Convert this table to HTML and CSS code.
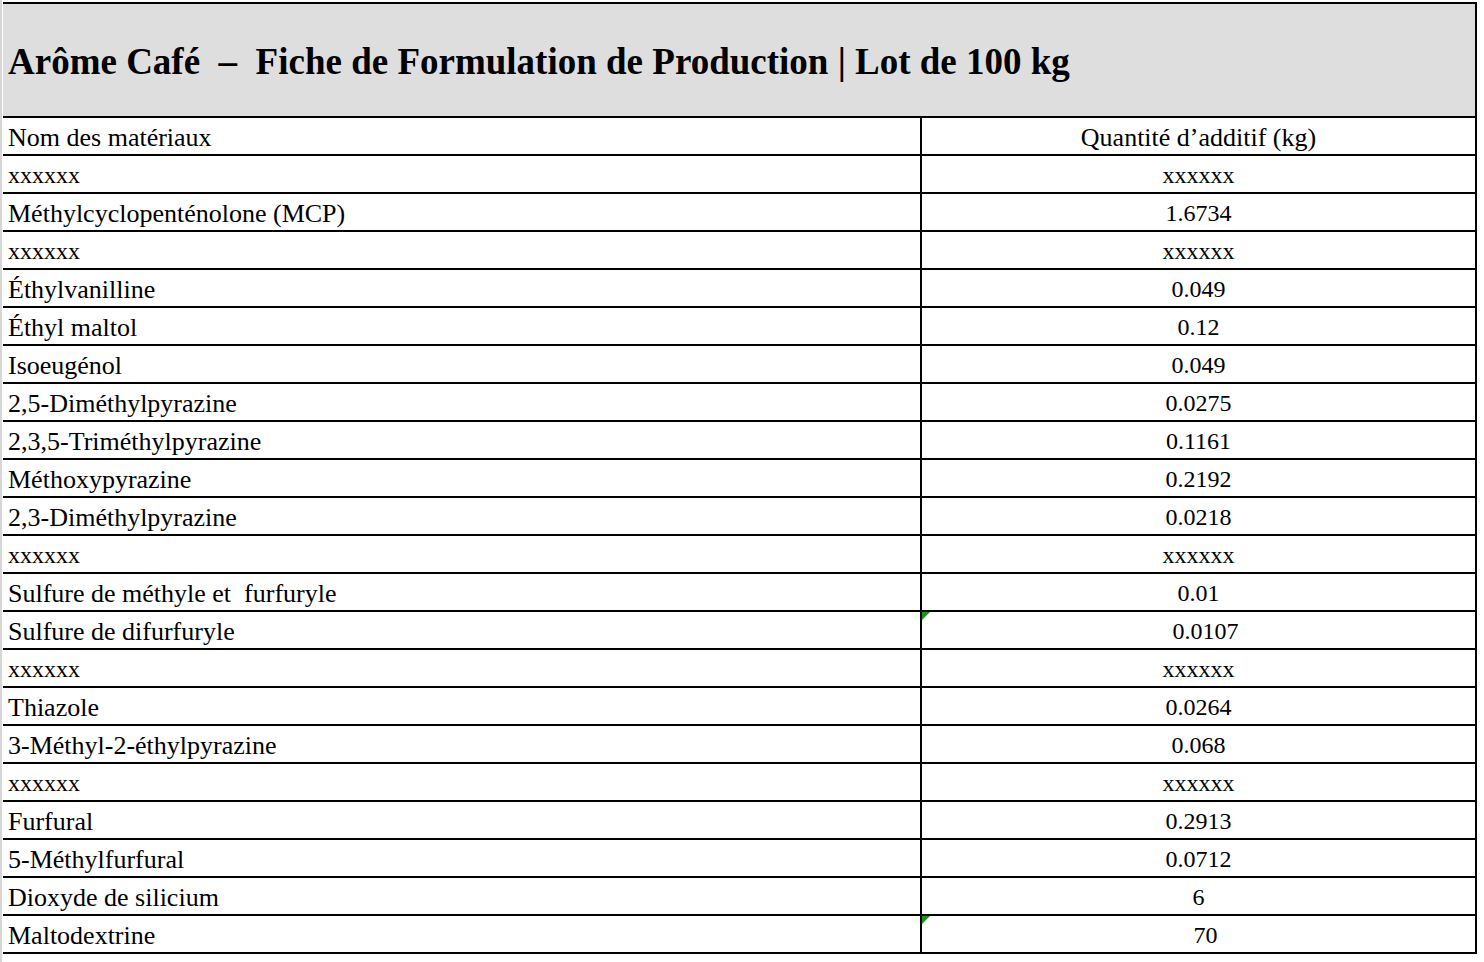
FILE: index.html
```html
<!DOCTYPE html>
<html lang="fr">
<head>
<meta charset="utf-8">
<title>Arôme Café – Fiche de Formulation</title>
<link rel="stylesheet" href="styles.css">
</head>
<body>
<div class="sheet">
  <div class="gutter"></div>
  <div class="table">
    <div class="title">Arôme Café&nbsp; –&nbsp; Fiche de Formulation de Production | Lot de 100 kg</div>
    <div class="row"><div class="c1">Nom des matériaux</div><div class="c2">Quantité d’additif (kg)</div></div>
    <div class="row"><div class="c1 n">xxxxxx</div><div class="c2 n">xxxxxx</div></div>
    <div class="row"><div class="c1">Méthylcyclopenténolone (MCP)</div><div class="c2 n">1.6734</div></div>
    <div class="row"><div class="c1 n">xxxxxx</div><div class="c2 n">xxxxxx</div></div>
    <div class="row"><div class="c1">Éthylvanilline</div><div class="c2 n">0.049</div></div>
    <div class="row"><div class="c1">Éthyl maltol</div><div class="c2 n">0.12</div></div>
    <div class="row"><div class="c1">Isoeugénol</div><div class="c2 n">0.049</div></div>
    <div class="row"><div class="c1">2,5-Diméthylpyrazine</div><div class="c2 n">0.0275</div></div>
    <div class="row"><div class="c1">2,3,5-Triméthylpyrazine</div><div class="c2 n">0.1161</div></div>
    <div class="row"><div class="c1">Méthoxypyrazine</div><div class="c2 n">0.2192</div></div>
    <div class="row"><div class="c1">2,3-Diméthylpyrazine</div><div class="c2 n">0.0218</div></div>
    <div class="row"><div class="c1 n">xxxxxx</div><div class="c2 n">xxxxxx</div></div>
    <div class="row"><div class="c1">Sulfure de méthyle et&nbsp; furfuryle</div><div class="c2 n">0.01</div></div>
    <div class="row"><div class="c1">Sulfure de difurfuryle</div><div class="c2 n txt"><span class="flag"></span>0.0107</div></div>
    <div class="row"><div class="c1 n">xxxxxx</div><div class="c2 n">xxxxxx</div></div>
    <div class="row"><div class="c1">Thiazole</div><div class="c2 n">0.0264</div></div>
    <div class="row"><div class="c1">3-Méthyl-2-éthylpyrazine</div><div class="c2 n">0.068</div></div>
    <div class="row"><div class="c1 n">xxxxxx</div><div class="c2 n">xxxxxx</div></div>
    <div class="row"><div class="c1">Furfural</div><div class="c2 n">0.2913</div></div>
    <div class="row"><div class="c1">5-Méthylfurfural</div><div class="c2 n">0.0712</div></div>
    <div class="row"><div class="c1">Dioxyde de silicium</div><div class="c2 n">6</div></div>
    <div class="row"><div class="c1">Maltodextrine</div><div class="c2 n txt"><span class="flag"></span>70</div></div>
  </div>
</div>
</body>
</html>
```
FILE: styles.css
```css
html, body {
  margin: 0;
  padding: 0;
  background: #ffffff;
}
body {
  font-family: "Liberation Serif", "DejaVu Serif", serif;
  color: #000;
  width: 1484px;
  height: 962px;
  overflow: hidden;
}
.sheet {
  display: flex;
  align-items: flex-start;
  height: 962px;
}
.gutter {
  width: 2px;
  height: 962px;
  background: #d6d6d6;
  margin-right: 1px;
  flex: none;
}
.table {
  width: 1472px;
  margin-top: 2px;
  border-top: 2px solid #000;
  border-right: 2px solid #000;
  flex: none;
}
.title {
  height: 114px;
  background: #dedede;
  border-bottom: 2px solid #000;
  display: flex;
  align-items: center;
  padding-left: 5px;
  padding-top: 2px;
  box-sizing: border-box;
  font-weight: bold;
  font-size: 37px;
  white-space: pre;
}
.row {
  display: flex;
  height: 36px;
  border-bottom: 2px solid #000;
  font-size: 26px;
}
.c1 {
  width: 912px;
  padding-left: 5px;
  padding-top: 3px;
  box-sizing: content-box;
  border-right: 2px solid #000;
  display: flex;
  align-items: center;
  white-space: pre;
}
.c2 {
  flex: 1;
  display: flex;
  align-items: center;
  justify-content: center;
  padding-top: 3px;
  position: relative;
}
.n {
  font-size: 24px;
}
.c2.txt {
  padding-left: 14px;
}
.flag {
  position: absolute;
  left: 0;
  top: 0;
  width: 0;
  height: 0;
  border-top: 8px solid #1f8f1f;
  border-right: 8px solid transparent;
}
```
